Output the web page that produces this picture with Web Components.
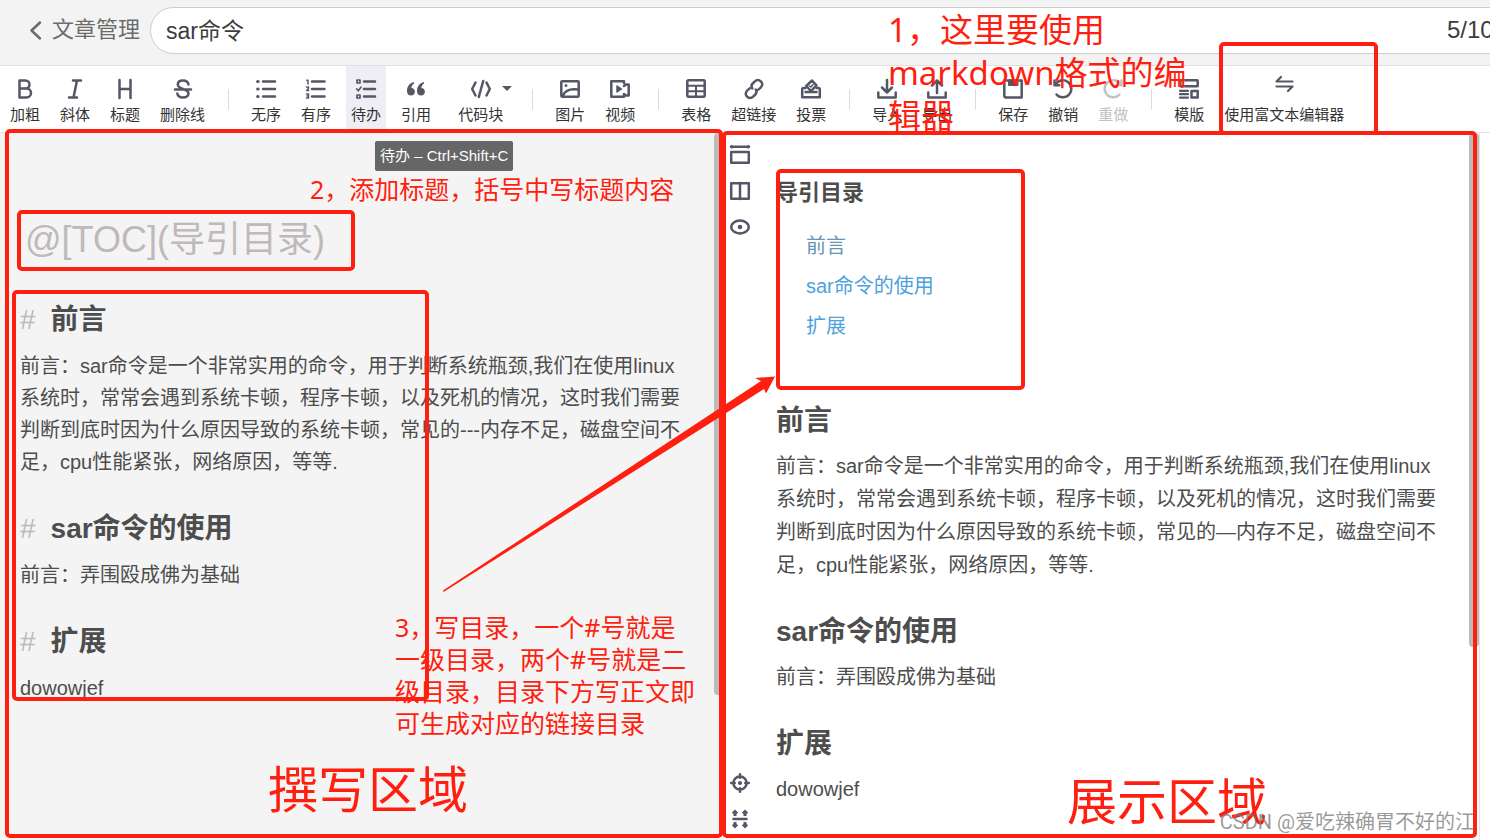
<!DOCTYPE html>
<html lang="zh-CN">
<head>
<meta charset="utf-8">
<meta name="viewport" content="width=device-width, initial-scale=1">
<title>sar命令 - 文章管理</title>
<style>
  html, body { margin: 0; }
  body {
    font-family: "Liberation Sans", "Noto Sans CJK SC", sans-serif;
    color: #4d4d4d;
    background: #fff;
    overflow: hidden;
    text-spacing-trim: space-all;
  }
</style>
</head>
<body>
<md-editor-app></md-editor-app>

<script>
const ICONS = {
  bold: '<path d="M4.500 1.500h6a4 4 0 0 1 0 8H4.500zM4.500 9.500h7a4.500 4.500 0 0 1 0 9H4.500z"/>',
  italic: '<path d="M8 1.500h8M4 18.500h8M12 1.500l-3.500 17"/>',
  heading: '<path d="M4.500 1v18M15.500 1v18M4.500 10h11"/>',
  strike: '<path d="M15.500 5.500C15 3 13 1.500 10 1.500S4.800 3 4.800 5.500 7 9 10 10s5.500 2 5.500 4.500-2.500 4-5.500 4-5.200-1.500-5.700-4M2 10.500h16"/>',
  ul: '<path d="M7 2.500h12M7 10h12M7 17.500h12"/><path d="M1.700 2.500h.4M1.700 10h.4M1.700 17.500h.4" stroke-width="3.200"/>',
  ol: '<path d="M6 2.500H18.500M6 10H18.500M6 17.500H18.500"/><path d="M.8 1.200h1.200v3.800M.5 8h2v1.500l-1.800 2h2M.5 15h2v4h-2M1 17h1.300" stroke-width="1.500"/>',
  todo: '<path d="M8 2.500h11M8 10h11M8 17.500h11"/><path d="M1 1h3v3H1zM1 16h3v3H1zM.8 10l1.500 1.800 2.700-3.600" stroke-width="1.700"/>',
  quote: '<path fill="currentColor" stroke="none" d="M8 3C3.500 4 1 7.500 1 12c0 3 1.700 4.600 4 4.600s3.900-1.600 3.900-3.800S7.300 9 5.300 9c.2-2 1.200-3.600 2.700-4.600zM18 3c-4.500 1-7 4.500-7 9 0 3 1.700 4.600 4 4.600s3.900-1.600 3.900-3.800S17.300 9 15.300 9c.2-2 1.200-3.600 2.700-4.600z"/>',
  code: '<path d="M4.500 3.500L1.200 10l3.300 6.500M15.500 3.500l3.300 6.500-3.300 6.500M12.200 2L7.800 18"/>',
  image: '<rect x="1.300" y="2.300" width="17.400" height="15.400" rx="1"/><path d="M3 16.500c2-5 8-7 15-6"/><circle cx="6" cy="6.500" r=".6" fill="currentColor" stroke-width="1.800"/>',
  video: '<path d="M14 4V2.300H1.300v15.400H14V15l2 1.500h2.700v-11H16L14 7"/><path d="M7 7l4.500 3L7 13z" fill="currentColor" stroke-width="1.500"/>',
  table: '<rect x="1.300" y="1.300" width="17.400" height="16.400" rx="1"/><path d="M1 6.800h18M1 12.200h18M10 6.800V18" stroke-width="2"/>',
  link: '<path d="M8.300 9.500C6.700 7.200 7.200 6 8.700 4.500l1.900-1.900c2.100-2.100 4.600-1.800 6.300-.2s1.900 4.200-.2 6.200l-2.400 2M11.700 10.500c1.600 2.300 1.100 3.500-.4 5l-1.900 1.900c-2.100 2.100-4.600 1.800-6.300.2s-1.900-4.200.2-6.200l2.400-2"/>',
  vote: '<path d="M4.500 9H2.500a1.300 1.300 0 0 0-1.300 1.300v8h17.600v-8A1.300 1.300 0 0 0 17.500 9h-2M4.500 13h11"/><path d="M5.200 7L11 1.500l4.500 4.800L10 12z"/><path d="M8.500 7l1.500 1 2-2.500" stroke-width="1.500"/>',
  importer: '<path d="M10 1V13M5 8.500L10 13.500 15 8.500M1.300 13.500v5h17.400v-5"/>',
  exporter: '<path d="M10 14V2M5 6.500L10 1.500 15 6.500M1.300 13.500v5h17.400v-5"/>',
  save: '<path d="M1.300 1.500h17.400v17H2.500l-1.200-1.200z"/><path d="M6 1.500h8.500v4.500H6z" fill="currentColor" stroke-width="2"/><path d="M11.500 2.500v1.500" stroke="#fff" stroke-width="1.800"/>',
  undo: '<path d="M2.500 5.500A8.500 8.500 0 1 1 3.500 15.500M1.500 1.500v4.800h4.800"/>',
  redo: '<path d="M17.500 5.500A8.500 8.500 0 1 0 16.500 15.500M18.500 1.500v4.800h-4.800"/>',
  template: '<rect x="1.300" y="1.300" width="17.400" height="5.900" rx=".5"/><path d="M1 11.800h8M1 15.200h8M1 18.600h8" stroke-width="2.200"/><rect x="12.500" y="12" width="6.200" height="6.600"/>',
  swap: '<path d="M18.500 2.500H2.500L7 -2M2.500 7.500h16L14 12" stroke-width="2.200"/>',
  full: '<path d="M1 1.800h18"/><path d="M2 .5L.8 1.800 2 3.100M18 .5l1.200 1.300L18 3.100" stroke-width="1.300"/><rect x="1.200" y="7" width="17.600" height="10.800"/>',
  columns: '<rect x="1.200" y="2.200" width="17.600" height="15.600"/><path d="M10 2v16"/>',
  eye: '<ellipse cx="10" cy="10" rx="8.800" ry="6.400"/><circle cx="10" cy="10" r="2.300" fill="currentColor" stroke="none"/>',
  target: '<circle cx="10" cy="10" r="6.600"/><path d="M10 1.200v3.500M10 15.300v3.500M1.200 10h3.500M15.300 10h3.500"/><circle cx="10" cy="10" r="2.100" fill="currentColor" stroke="none"/>',
  sync: '<path d="M3.500 10h13"/><path fill="currentColor" stroke="none" d="M5 .5l3.200 3.200L6.500 5v2h-3V5L1.800 3.700zM15 .5l3.200 3.200L16.500 5v2h-3V5l-1.700-1.300zM5 19.500l3.200-3.200L6.500 15v-2h-3v2l-1.700 1.300zM15 19.500l3.200-3.200-1.700-1.300v-2h-3v2l-1.700 1.300z"/>',
  back: '<path d="M14 2.500L5.500 10.500l8.500 8"/>'
};

function define(name, html, setup) {
  const template = document.createElement('template');
  template.innerHTML = html;
  customElements.define(name, class extends HTMLElement {
    constructor() {
      super();
      this.attachShadow({ mode: 'open' }).append(template.content.cloneNode(true));
    }
    connectedCallback() { if (setup) setup(this, this.shadowRoot); }
  });
}

define('md-icon', `
  <style>
    :host { display: block; width: 20px; height: 20px; }
    svg { display: block; width: 100%; height: 100%; overflow: visible; fill: none; stroke: currentColor; stroke-width: 2.5; stroke-linecap: round; stroke-linejoin: round; }
  </style>
  <svg viewBox="0 0 20 20" aria-hidden="true"></svg>`,
  (host, root) => { root.querySelector('svg').innerHTML = ICONS[host.getAttribute('name')] || ''; });

define('tool-button', `
  <style>
    :host { display: flex; }
    button { position: relative; border: 0; margin: 0; padding: 13px 5px 0; background: none; font: inherit; color: #333;
      display: flex; flex-direction: column; align-items: center; gap: 6px; white-space: nowrap; }
    md-icon { color: #555666; }
    span { font-size: 15px; line-height: 20px; }
    :host([active]) button { background: #eeeef4; }
    :host([disabled]) button, :host([disabled]) md-icon { color: #c2c2c6; }
    i { display: none; position: absolute; top: 20px; right: 2px; border: 5px solid transparent; border-top-color: #555666; border-bottom: 0; }
    :host([menu]) button { padding-left: 12px; padding-right: 11px; }
    :host([menu]) i { display: block; }
  </style>
  <button type="button"><md-icon></md-icon><span><slot></slot></span><i></i></button>`,
  (host, root) => {
    const icon = root.querySelector('md-icon');
    icon.setAttribute('name', host.getAttribute('icon'));
    icon.replaceWith(icon.cloneNode());
    root.querySelector('button').disabled = host.hasAttribute('disabled');
  });

define('tool-divider', `
  <style>:host { display: block; width: 1px; height: 21px; margin: 23px 7px 0 8px; background: #dcdce0; }</style>`);

define('title-bar', `
  <style>
    :host { display: flex; align-items: flex-start; height: 65px; background: #f3f3f3; border-bottom: 1px solid #e0e0e0; overflow: hidden; }
    a { display: flex; align-items: center; gap: 6px; margin: 14px 10px 0 26px; font-size: 22px; line-height: 32px; color: #6b6b6b; text-decoration: none; }
    .field { flex: 1; display: flex; align-items: center; box-sizing: border-box; height: 47px; margin: 7px -34px 0 0; padding: 0 16px 2px 15px;
      background: #fff; border: 1px solid #ccc; border-radius: 24px; color: #3d3d3d; }
    input { flex: 1; min-width: 0; border: 0; padding: 0 0 2px; background: none; outline: 0; font: inherit; font-size: 23px; color: inherit; }
    output { font-size: 24px; }
  </style>
  <a href="#"><md-icon name="back"></md-icon>文章管理</a>
  <div class="field"><input aria-label="文章标题" value="sar命令"><output>5/100</output></div>`);

define('tool-bar', `
  <style>
    :host { display: flex; gap: 10px; height: 66px; padding-left: 5px; background: #fff; border-bottom: 1px solid #e3e3e3; }
  </style>
  <tool-button icon="bold">加粗</tool-button>
  <tool-button icon="italic">斜体</tool-button>
  <tool-button icon="heading">标题</tool-button>
  <tool-button icon="strike">删除线</tool-button>
  <tool-divider></tool-divider>
  <tool-button icon="ul">无序</tool-button>
  <tool-button icon="ol">有序</tool-button>
  <tool-button icon="todo" active>待办</tool-button>
  <tool-button icon="quote">引用</tool-button>
  <tool-button icon="code" menu>代码块</tool-button>
  <tool-divider></tool-divider>
  <tool-button icon="image">图片</tool-button>
  <tool-button icon="video">视频</tool-button>
  <tool-divider></tool-divider>
  <tool-button icon="table">表格</tool-button>
  <tool-button icon="link">超链接</tool-button>
  <tool-button icon="vote">投票</tool-button>
  <tool-divider></tool-divider>
  <tool-button icon="importer">导入</tool-button>
  <tool-button icon="exporter">导出</tool-button>
  <tool-divider></tool-divider>
  <tool-button icon="save">保存</tool-button>
  <tool-button icon="undo">撤销</tool-button>
  <tool-button icon="redo" disabled>重做</tool-button>
  <tool-divider></tool-divider>
  <tool-button icon="template">模版</tool-button>
  <tool-button icon="swap">使用富文本编辑器</tool-button>`);

define('source-pane', `
  <style>
    :host { display: block; position: relative; background: #f4f4f4; }
    .doc { padding: 81px 40px 0 20px; outline: 0; }
    .toc { margin: 0 0 34px 5px; font-size: 36px; line-height: 52px; color: #bfb9ba; }
    h1 { display: flex; gap: 15px; margin: 0 0 10px; font-size: 28px; line-height: 40px; }
    h1 span { font-weight: 400; color: #bfb9ba; }
    p { margin: 0 0 31px; font-size: 20px; line-height: 32px; }
    .thumb { position: absolute; top: 0; right: 2px; width: 8px; height: 562px; background: #bbb; border-radius: 4px; }
  </style>
  <div class="doc" role="textbox" aria-label="正文" aria-multiline="true" contenteditable="true" spellcheck="false">
    <div class="toc">@[TOC](导引目录)</div>
    <h1><span>#</span>前言</h1>
    <p>前言：sar命令是一个非常实用的命令，用于判断系统瓶颈,我们在使用linux系统时，常常会遇到系统卡顿，程序卡顿，以及死机的情况，这时我们需要判断到底时因为什么原因导致的系统卡顿，常见的---内存不足，磁盘空间不足，cpu性能紧张，网络原因，等等.</p>
    <h1><span>#</span>sar命令的使用</h1>
    <p>前言：弄围殴成佛为基础</p>
    <h1><span>#</span>扩展</h1>
    <p>dowowjef</p>
  </div>
  <div class="thumb"></div>`);

define('view-switch', `
  <style>
    :host { display: flex; flex-direction: column; align-items: center; justify-content: space-between; padding: 12px 0 11px; box-sizing: border-box; }
    div { display: flex; flex-direction: column; gap: 16px; }
    button { display: block; border: 0; padding: 0; background: none; color: #555666; }
  </style>
  <div>
    <button type="button" aria-label="全屏"><md-icon name="full"></md-icon></button>
    <button type="button" aria-label="双栏"><md-icon name="columns"></md-icon></button>
    <button type="button" aria-label="预览"><md-icon name="eye"></md-icon></button>
  </div>
  <div>
    <button type="button" aria-label="定位"><md-icon name="target"></md-icon></button>
    <button type="button" aria-label="同步滚动"><md-icon name="sync"></md-icon></button>
  </div>`);

define('preview-pane', `
  <style>
    :host { display: block; position: relative; box-sizing: border-box; padding: 44px 40px 0 20px; border-right: 1px solid #e3e3e3; }
    h3 { margin: 0 0 17px; font-size: 22px; line-height: 32px; }
    ul { margin: 0 0 55px; padding: 0 0 0 30px; list-style: none; font-size: 20px; line-height: 40px; }
    a { color: #4ea1db; text-decoration: none; }
    li:first-child a { color: #6795b5; }
    h1 { margin: 0 0 9px; font-size: 28px; line-height: 40px; }
    p { margin: 0 0 30px; font-size: 20px; line-height: 33px; }
    .thumb { position: absolute; top: 0; right: 0; width: 10px; height: 514px; background: #bbb; border-radius: 4px; }
  </style>
  <h3>导引目录</h3>
  <ul>
    <li><a href="#intro">前言</a></li>
    <li><a href="#usage">sar命令的使用</a></li>
    <li><a href="#more">扩展</a></li>
  </ul>
  <h1 id="intro">前言</h1>
  <p>前言：sar命令是一个非常实用的命令，用于判断系统瓶颈,我们在使用linux系统时，常常会遇到系统卡顿，程序卡顿，以及死机的情况，这时我们需要判断到底时因为什么原因导致的系统卡顿，常见的—内存不足，磁盘空间不足，cpu性能紧张，网络原因，等等.</p>
  <h1 id="usage">sar命令的使用</h1>
  <p>前言：弄围殴成佛为基础</p>
  <h1 id="more">扩展</h1>
  <p>dowowjef</p>
  <div class="thumb"></div>`);

define('hover-tip', `
  <style>
    :host { position: absolute; left: 375px; top: 141px; padding: 0 5px; border-radius: 2px; background: #666; color: #fff; font-size: 15px; line-height: 30px; white-space: nowrap; }
  </style><slot></slot>`);

/* Hand-drawn frames, notes and arrow laid over the editor. */
define('mark-layer', `
  <style>
    :host { position: absolute; inset: 0; pointer-events: none; color: #ff1f10; font-family: "Noto Sans", "Noto Sans CJK SC", sans-serif; }
    .box, .note, svg { position: absolute; box-sizing: border-box; }
    .box { border: 4px solid; border-radius: 5px; }
    .note { margin: 0; white-space: nowrap; }
    .small { font-size: 25px; line-height: 32px; }
    .medium { font-size: 33px; line-height: 43px; }
    .large { font-size: 50px; line-height: 60px; }
    svg { left: 440px; top: 370px; width: 340px; height: 225px; fill: currentColor; }
    .stamp { position: absolute; right: 15px; bottom: 4px; font: 20px/28px Roboto, "Noto Sans CJK SC", sans-serif; color: rgba(120,120,120,.75); white-space: nowrap; }
  </style>
  <div class="box" style="left:5px;top:129px;width:718px;height:709px"></div>
  <div class="box" style="left:722px;top:131px;width:755px;height:707px"></div>
  <div class="box" style="left:17px;top:210px;width:338px;height:61px"></div>
  <div class="box" style="left:12px;top:290px;width:417px;height:411px"></div>
  <div class="box" style="left:1219px;top:42px;width:159px;height:93px"></div>
  <div class="box" style="left:776px;top:169px;width:249px;height:221px"></div>
  <svg viewBox="440 370 340 225" aria-hidden="true"><path d="M443 590.500L761 381 755 378 775 376.500 766 393.500 764 389 443.500 592z"/></svg>
  <p class="note medium" style="left:888px;top:8px">1，这里要使用<br>markdown格式的编<br>辑器</p>
  <p class="note small" style="left:310px;top:173px">2，添加标题，括号中写标题内容</p>
  <p class="note small" style="left:395px;top:611px">3，写目录，一个#号就是<br>一级目录，两个#号就是二<br>级目录，目录下方写正文即<br>可生成对应的链接目录</p>
  <p class="note large" style="left:268px;top:759px">撰写区域</p>
  <p class="note large" style="left:1067px;top:771px">展示区域</p>
  <div class="stamp">CSDN @爱吃辣确胃不好的江</div>`);

define('md-editor-app', `
  <style>
    :host { display: flex; flex-direction: column; position: relative; min-height: 100vh; }
    main { flex: 1; display: grid; grid-template-columns: minmax(0, 1fr) 32px minmax(0, 1fr); padding-right: 10px; }
  </style>
  <title-bar></title-bar>
  <tool-bar></tool-bar>
  <main>
    <source-pane></source-pane>
    <view-switch></view-switch>
    <preview-pane></preview-pane>
  </main>
  <hover-tip role="tooltip">待办 – Ctrl+Shift+C</hover-tip>
  <mark-layer></mark-layer>`);
</script>
</body>
</html>
